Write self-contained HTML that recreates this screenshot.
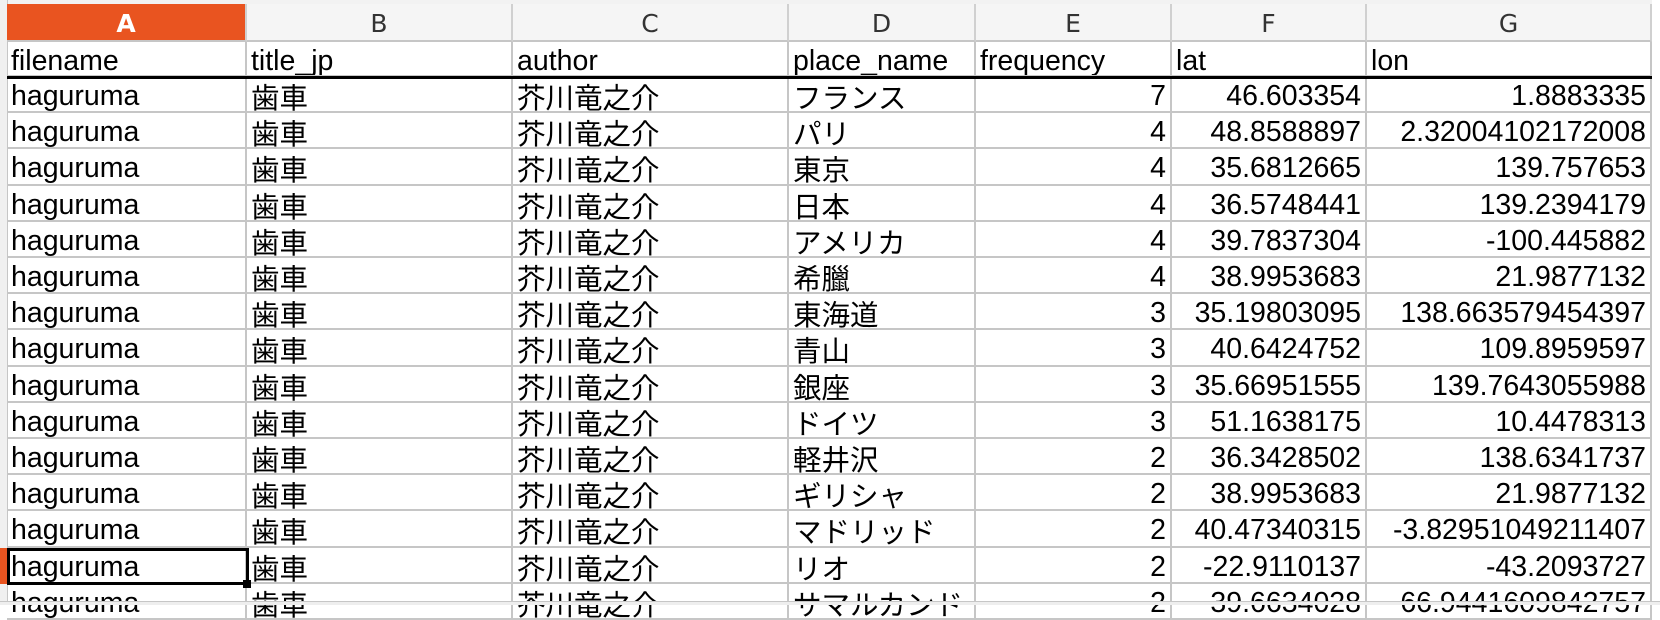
<!DOCTYPE html>
<html><head><meta charset="utf-8"><style>
body{margin:0;width:1660px;height:604px;overflow:hidden;background:#fff;position:relative;font-family:"Liberation Sans","Noto Sans CJK JP",sans-serif;}
.c{position:absolute;box-sizing:border-box;border-right:2px solid #c6c6c6;border-bottom:2px solid #c6c6c6;font-size:28.5px;color:#000;padding:5px 4px 0 4px;white-space:nowrap;overflow:hidden;display:flex;align-items:center;}
.r{justify-content:flex-end;}
.h{position:absolute;top:4px;height:38px;box-sizing:border-box;border-right:2px solid #d0d0d0;border-bottom:2px solid #c6c6c6;background:#f5f5f5;color:#333;font-family:"DejaVu Sans",sans-serif;font-size:25px;padding-top:2px;display:flex;align-items:center;justify-content:center;}
</style></head><body>
<div style="position:absolute;left:0;top:0;width:1660px;height:4px;background:#f2f2f2;border-bottom:1px solid #c6c6c6"></div>
<div style="position:absolute;left:0;top:0;width:7px;height:604px;background:#f0f0f0;border-right:1px solid #c6c6c6"></div>
<div style="position:absolute;left:0;top:548px;width:7px;height:36px;background:#e95420"></div>
<div style="position:absolute;left:1652px;top:0;width:8px;height:604px;background:#fff"></div>
<div id="g"></div>
<script>
(function(){
var cols=[7,247,513,789,976,1172,1367,1652];
var L=['A','B','C','D','E','F','G'];
var out='';
for(var i=0;i<7;i++){out+='<div class="h" style="left:'+cols[i]+'px;width:'+(cols[i+1]-cols[i])+'px;'+(i==0?'background:#e95420;color:#fff;font-weight:bold;':'')+'">'+L[i]+'</div>';}
var rows=[['filename','title_jp','author','place_name','frequency','lat','lon']];
var d=[['フランス',7,'46.603354','1.8883335'],['パリ',4,'48.8588897','2.32004102172008'],['東京',4,'35.6812665','139.757653'],['日本',4,'36.5748441','139.2394179'],['アメリカ',4,'39.7837304','-100.445882'],['希臘',4,'38.9953683','21.9877132'],['東海道',3,'35.19803095','138.663579454397'],['青山',3,'40.6424752','109.8959597'],['銀座',3,'35.66951555','139.7643055988'],['ドイツ',3,'51.1638175','10.4478313'],['軽井沢',2,'36.3428502','138.6341737'],['ギリシャ',2,'38.9953683','21.9877132'],['マドリッド',2,'40.47340315','-3.82951049211407'],['リオ',2,'-22.9110137','-43.2093727'],['サマルカンド',2,'39.6634028','66.9441609842757']];
d.forEach(function(x){rows.push(['haguruma','歯車','芥川竜之介',x[0],String(x[1]),x[2],x[3]]);});
for(var r=0;r<rows.length;r++){
 var ty=r==0?42:77+(r-1)*36.2, h=r==0?35:36.2;
 for(var c=0;c<7;c++){
  var right=(r>0&&c>=4);
  out+='<div class="c'+(right?' r':'')+'" style="left:'+cols[c]+'px;top:'+ty+'px;width:'+(cols[c+1]-cols[c])+'px;height:'+h+'px">'+rows[r][c]+'</div>';
 }
}
out+='<div style="position:absolute;left:7px;top:76px;width:1645px;height:3px;background:#000"></div>';
out+='<div style="position:absolute;left:7px;top:548px;width:242px;height:37px;box-sizing:border-box;border:3px solid #000"></div>';
out+='<div style="position:absolute;left:243px;top:580px;width:8px;height:8px;background:#000"></div>';
out+='<div style="position:absolute;left:0;top:601px;width:1660px;height:3px;background:#eee;border-top:1px solid #c6c6c6"></div>';
document.getElementById('g').innerHTML=out;
})();
</script>
</body></html>
